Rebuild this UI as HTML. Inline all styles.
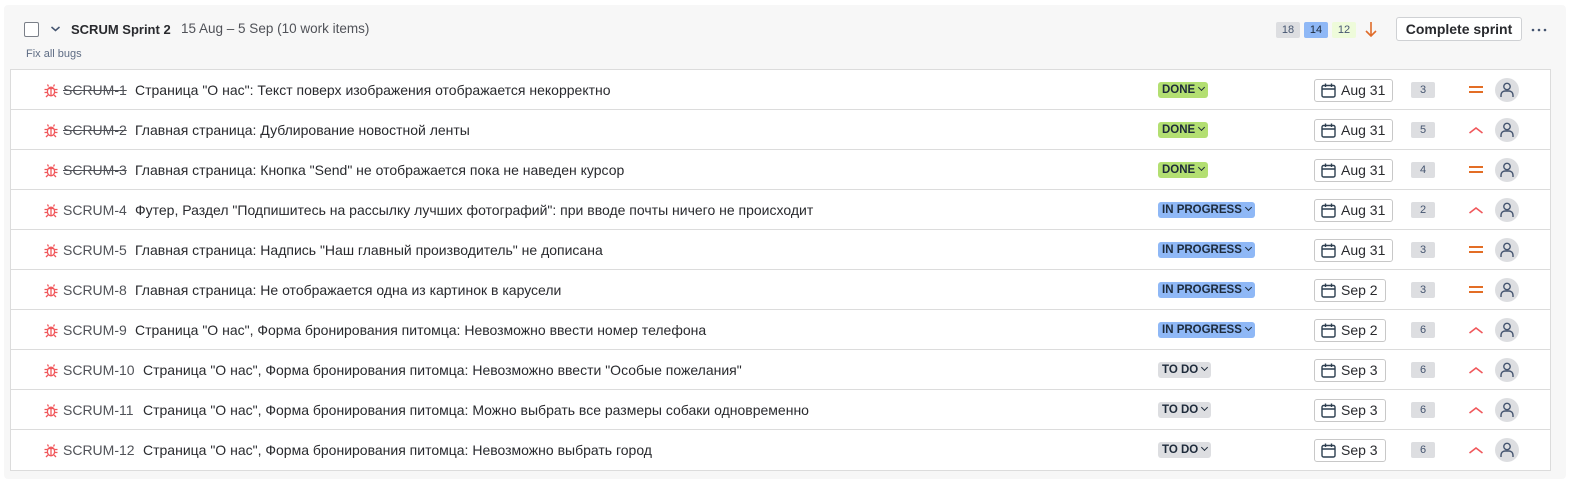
<!DOCTYPE html>
<html><head><meta charset="utf-8"><style>
*{box-sizing:border-box;margin:0;padding:0}
body{width:1569px;height:480px;background:#fff;font-family:"Liberation Sans","DejaVu Sans",sans-serif;color:#292a2e;position:relative;overflow:hidden}
.panel{position:absolute;left:4px;top:5px;width:1562px;height:474px;background:#f7f7f7;border-radius:4px}
.abs{position:absolute}
.list{position:absolute;left:10px;top:69px;width:1541px;height:402px;background:#fff;border:1px solid #dcdcdc}
.row{position:absolute;left:0;width:1539px;height:40px;border-bottom:1px solid #dcdcdc;font-size:14px}
.row:last-child{border-bottom:none}
.row>*{position:absolute}
.bug{left:32px;top:12px}
.key{left:52px;top:12px;color:#505258}
.key.done{text-decoration:line-through}
.sum{top:12px;color:#292a2e}
.st{left:1147px;top:12px;height:16px;border-radius:3px;font-size:11.5px;font-weight:bold;padding:0 4px;line-height:16px;color:#1d2a3a}
.done-s{background:#b3df72}
.prog{background:#8fb8f6}
.todo{background:#dddee1}
.date{left:1303px;top:9px;height:23px;border:1px solid #c8c8c8;border-radius:3px;font-size:14px;line-height:21px;padding-left:26px;padding-right:7px;color:#292a2e}
.date svg{position:absolute;left:6px;top:3px}
.est{left:1400px;top:12px;width:24px;height:16px;background:#dddee1;border-radius:2px;font-size:11px;text-align:center;line-height:16px;color:#44546f}
.pri{left:1457px;top:12px}
.av{left:1484px;top:8px;width:24px;height:24px;border-radius:50%;background:#dddee1}
.av svg{position:absolute;left:5px;top:4px}
.chev{display:inline-block;width:5px;height:5px;border-right:1.8px solid #1d2a3a;border-bottom:1.8px solid #1d2a3a;transform:rotate(45deg);margin-left:4px;position:relative;top:-3px}
</style></head><body>
<div class="panel"></div>
<div class="abs" style="left:24px;top:22px;width:15px;height:15px;border:1.5px solid #7a7f88;border-radius:2px;background:#fff"></div>
<svg class="abs" style="left:50px;top:25px" width="11" height="8"><path d="M1.5 2l4 3.5 4-3.5" stroke="#44546f" stroke-width="1.5" fill="none"/></svg>
<div class="abs" style="left:71px;top:22px;font-size:13px;font-weight:bold;color:#292a2e">SCRUM Sprint 2</div>
<div class="abs" style="left:181px;top:21px;font-size:13.5px;color:#505258">15 Aug – 5 Sep (10 work items)</div>
<div class="abs" style="left:26px;top:48px;font-size:11px;color:#5e6c84">Fix all bugs</div>
<div class="abs" style="left:1276px;top:22px;width:24px;height:16px;background:#dddee1;border-radius:2px;font-size:11px;text-align:center;line-height:16px;color:#44546f">18</div>
<div class="abs" style="left:1304px;top:22px;width:24px;height:16px;background:#8fb8f6;border-radius:2px;font-size:11px;text-align:center;line-height:16px;color:#1d2a3a">14</div>
<div class="abs" style="left:1332px;top:22px;width:24px;height:16px;background:#eefbda;border-radius:2px;font-size:11px;text-align:center;line-height:16px;color:#44546f">12</div>
<svg class="abs" style="left:1364px;top:21px" width="14" height="17"><path d="M7 1v14M2 10l5 5 5-5" stroke="#e06c2a" stroke-width="1.6" fill="none"/></svg>
<div class="abs" style="left:1396px;top:17px;width:126px;height:24px;border:1px solid #cfd1d4;border-radius:3px;background:#fff;font-size:14px;font-weight:bold;text-align:center;line-height:22px;color:#292a2e">Complete sprint</div>
<svg class="abs" style="left:1531px;top:28px" width="18" height="4"><circle cx="2" cy="2" r="1.3" fill="#44546f"/><circle cx="8" cy="2" r="1.3" fill="#44546f"/><circle cx="14" cy="2" r="1.3" fill="#44546f"/></svg>
<div class="list"></div>
<script>
const bug='<svg width="16" height="16" viewBox="0 0 16 16" fill="none" stroke="#f0575b" stroke-width="1.3"><ellipse cx="8" cy="9.5" rx="3.6" ry="4.3"/><path d="M5.5 4.5L4.5 2.5M10.5 4.5l1-2M4.4 7.5H1.5M4.4 10.5H1.5M11.6 7.5h2.9M11.6 10.5h2.9M5 13l-2 2M11 13l2 2M4.8 6.5h6.4M8 6.5v7"/></svg>';
const cal='<svg width="15" height="15" viewBox="0 0 15 15" fill="none" stroke="#2c3e50" stroke-width="1.4"><rect x="1" y="2.5" width="13" height="11.5" rx="1.5"/><path d="M1 6h13M4.5 0.5v3.5M10.5 0.5v3.5"/></svg>';
const eq='<svg width="16" height="16"><path d="M1 5h14M1 10h14" stroke="#e36d25" stroke-width="2"/></svg>';
const up='<svg width="16" height="16"><path d="M1.5 11l6.5-5 6.5 5" stroke="#f0575b" stroke-width="1.6" fill="none"/></svg>';
const av='<svg width="14" height="16" viewBox="0 0 14 16" fill="none" stroke="#44546f" stroke-width="1.4"><circle cx="7" cy="4.5" r="3.2"/><path d="M1 15v-2a4 4 0 0 1 4-4h4a4 4 0 0 1 4 4v2"/></svg>';
const rows=[
["SCRUM-1",1,'Страница "О нас": Текст поверх изображения отображается некорректно',"d","Aug 31",3,eq],
["SCRUM-2",1,'Главная страница: Дублирование новостной ленты',"d","Aug 31",5,up],
["SCRUM-3",1,'Главная страница: Кнопка "Send" не отображается пока не наведен курсор',"d","Aug 31",4,eq],
["SCRUM-4",0,'Футер, Раздел "Подпишитесь на рассылку лучших фотографий": при вводе почты ничего не происходит',"p","Aug 31",2,up],
["SCRUM-5",0,'Главная страница: Надпись "Наш главный производитель" не дописана',"p","Aug 31",3,eq],
["SCRUM-8",0,'Главная страница: Не отображается одна из картинок в карусели',"p","Sep 2",3,eq],
["SCRUM-9",0,'Страница "О нас", Форма бронирования питомца: Невозможно ввести номер телефона',"p","Sep 2",6,up],
["SCRUM-10",0,'Страница "О нас", Форма бронирования питомца: Невозможно ввести "Особые пожелания"',"t","Sep 3",6,up],
["SCRUM-11",0,'Страница "О нас", Форма бронирования питомца: Можно выбрать все размеры собаки одновременно',"t","Sep 3",6,up],
["SCRUM-12",0,'Страница "О нас", Форма бронирования питомца: Невозможно выбрать город',"t","Sep 3",6,up]];
let h='';
rows.forEach((r,i)=>{
 const st=r[3]=="d"?'<div class="st done-s">DONE<span class="chev"></span></div>':r[3]=="p"?'<div class="st prog">IN PROGRESS<span class="chev"></span></div>':'<div class="st todo">TO DO<span class="chev"></span></div>';
 const sl=r[0].length>7?132:124;
 h+=`<div class="row" style="top:${i*40}px"><span class="bug">${bug}</span><span class="key${r[1]?' done':''}">${r[0]}</span><span class="sum" style="left:${sl}px">${r[2]}</span>${st}<div class="date">${cal}${r[4]}</div><div class="est">${r[5]}</div><span class="pri">${r[6]}</span><div class="av">${av}</div></div>`;
});
document.querySelector('.list').innerHTML=h;
</script>
</body></html>
